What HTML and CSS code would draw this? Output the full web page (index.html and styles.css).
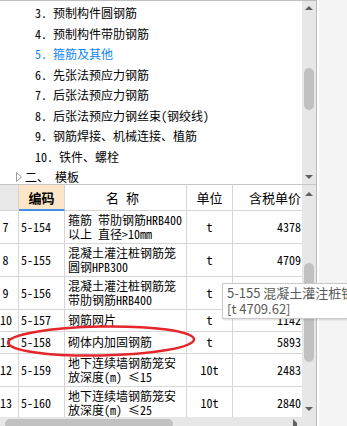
FILE: index.html
```html
<!DOCTYPE html>
<html lang="zh-CN">
<head>
<meta charset="utf-8">
<title>定额列表</title>
<link rel="stylesheet" href="styles.css">
</head>
<body>
<div class="app">
  <div class="main">
    <div class="tree">
      <ul class="tree-list">
        <li class="item"><span class="num">3.</span>预制构件圆钢筋</li>
        <li class="item"><span class="num">4.</span>预制构件带肋钢筋</li>
        <li class="item active"><span class="num">5.</span>箍筋及其他</li>
        <li class="item"><span class="num">6.</span>先张法预应力钢筋</li>
        <li class="item"><span class="num">7.</span>后张法预应力钢筋</li>
        <li class="item"><span class="num">8.</span>后张法预应力钢丝束(钢绞线)</li>
        <li class="item"><span class="num">9.</span>钢筋焊接、机械连接、植筋</li>
        <li class="item"><span class="num">10.</span>铁件、螺栓</li>
        <li class="item group"><svg class="caret" viewBox="0 0 6 10"><polygon points="0.5,0.5 5.5,5 0.5,9.5" fill="none" stroke="#9a9a9a" stroke-width="1"/></svg><span>二、 模板</span></li>
      </ul>
      <div class="vscroll">
        <div class="arrow-box"><div class="tri-up"></div></div>
        <div class="thumb tree-thumb"></div>
        <div class="spacer"></div>
        <div class="arrow-box"><div class="tri-down"></div></div>
      </div>
    </div>
    <div class="table-panel">
      <div class="table-body">
        <div class="grid">
          <div class="c h rn"></div>
          <div class="c h code">编码</div>
          <div class="c h name"><span class="wide">名称</span></div>
          <div class="c h unit">单位</div>
          <div class="c h price">含税单价</div>

          <div class="c rn"><span>7</span></div>
          <div class="c code">5-154</div>
          <div class="c name">箍筋 带肋钢筋HRB400<br>以上 直径&gt;10mm</div>
          <div class="c unit">t</div>
          <div class="c price">4378</div>

          <div class="c rn"><span>8</span></div>
          <div class="c code">5-155</div>
          <div class="c name">混凝土灌注桩钢筋笼<br>圆钢HPB300</div>
          <div class="c unit">t</div>
          <div class="c price">4709</div>

          <div class="c rn"><span>9</span></div>
          <div class="c code">5-156</div>
          <div class="c name">混凝土灌注桩钢筋笼<br>带肋钢筋HRB400</div>
          <div class="c unit">t</div>
          <div class="c price">4621</div>

          <div class="c rn"><span>10</span></div>
          <div class="c code">5-157</div>
          <div class="c name">钢筋网片</div>
          <div class="c unit">t</div>
          <div class="c price">1142</div>

          <div class="c rn"><span>11</span></div>
          <div class="c code">5-158</div>
          <div class="c name">砌体内加固钢筋</div>
          <div class="c unit">t</div>
          <div class="c price">5893</div>

          <div class="c rn"><span>12</span></div>
          <div class="c code">5-159</div>
          <div class="c name">地下连续墙钢筋笼安<br>放深度(m) ≤15</div>
          <div class="c unit">10t</div>
          <div class="c price">2483</div>

          <div class="c rn"><span>13</span></div>
          <div class="c code">5-160</div>
          <div class="c name">地下连续墙钢筋笼安<br>放深度(m) ≤25</div>
          <div class="c unit">10t</div>
          <div class="c price">2840</div>
        </div>
        <div class="vscroll table-scroll">
          <div class="arrow-box"><div class="tri-up"></div></div>
          <div class="thumb table-thumb"></div>
          <div class="spacer"></div>
          <div class="arrow-box"><div class="tri-down"></div></div>
        </div>
      </div>
      <div class="hscroll">
        <div class="hthumb"></div>
        <div class="spacer"></div>
        <div class="harrow"><div class="tri-right"></div></div>
        <div class="corner"></div>
      </div>
    </div>
  </div>
  <div class="side"></div>
</div>

<div class="tooltip">
  <div>5-155 混凝土灌注桩钢筋笼圆钢HPB300</div>
  <div>[t 4709.62]</div>
</div>

<svg class="mark" viewBox="0 0 347 426">
  <ellipse cx="101" cy="341" rx="93" ry="14.5" fill="none" stroke="#e5262a" stroke-width="2.5" transform="rotate(-1 101 341)"/>
</svg>
</body>
</html>
```

FILE: styles.css
```css
* { box-sizing: border-box; }
html, body { margin: 0; padding: 0; }
body {
  width: 347px;
  height: 426px;
  overflow: hidden;
  position: relative;
  background: #f4f4f4;
  font-family: "Noto Sans CJK SC", sans-serif;
  font-size: 12px;
  color: #000;
}
.app { display: flex; height: 426px; }
.main {
  width: 317px;
  border-right: 1px solid #bababa;
  display: flex;
  flex-direction: column;
  background: #fff;
}
.side { flex: 1; border-left: 2px solid #fff; background: #f4f4f4; }

/* tree */
.tree { height: 184px; flex: none; border-top: 1px solid #bebebe; display: flex; }
.tree-list {
  flex: 1;
  margin: 0;
  padding: 2px 0 0;
  list-style: none;
  overflow: hidden;
  font-feature-settings: "hwid" 1;
}
.item { height: 20.5px; line-height: 20.5px; padding-left: 35px; white-space: nowrap; }
.num { margin-right: 6px; }
.item.active { color: #0f87f2; }
.item.group { padding-left: 16px; display: flex; align-items: center; }
.caret { width: 6px; height: 10px; margin-right: 3px; flex: none; }

/* scrollbars */
.vscroll {
  width: 14px;
  flex: none;
  background: #e7e7e7;
  display: flex;
  flex-direction: column;
  align-items: center;
}
.arrow-box {
  width: 14px;
  height: 14px;
  flex: none;
  display: flex;
  align-items: center;
  justify-content: center;
}
.tri-up { border-left: 4px solid transparent; border-right: 4px solid transparent; border-bottom: 4px solid #606060; }
.tri-down { border-left: 4px solid transparent; border-right: 4px solid transparent; border-top: 4px solid #606060; }
.tri-right { border-top: 4px solid transparent; border-bottom: 4px solid transparent; border-left: 4px solid #606060; }
.thumb { width: 10px; border-radius: 5px; background: #c1c1c1; flex: none; }
.tree-thumb { margin-top: 53px; height: 42px; }
.spacer { flex: 1; }
.table-scroll .arrow-box:first-child { margin-top: 2px; }
.table-scroll .arrow-box:last-child { margin-bottom: 1px; }
.table-thumb { margin-top: 62px; height: 99px; }

/* table */
.table-panel {
  flex: 1;
  border-top: 1px solid #c6c6c6;
  display: flex;
  flex-direction: column;
  overflow: hidden;
}
.table-body { height: 232px; flex: none; display: flex; }
.grid {
  flex: 1;
  display: grid;
  grid-template-columns: 19px 46px 122px 46px 69px;
  grid-template-rows: 26px 33px 33px 33px 22px 22px 33px 33px;
  overflow: hidden;
}
.c {
  border-right: 1px solid #d6d6d6;
  border-bottom: 1px solid #d6d6d6;
  display: flex;
  align-items: center;
  overflow: hidden;
  white-space: nowrap;
  line-height: 14.5px;
  font-feature-settings: "hwid" 1;
}
.c.rn span { width: 11px; flex: none; text-align: center; }
.c.code { padding-left: 2px; }
.c.name { padding-left: 3px; }
.c.unit { justify-content: center; }
.c.price { justify-content: flex-end; padding-right: 1px; border-right: none; }

.h { font-size: 13px; justify-content: center; font-feature-settings: normal; padding-top: 2px; }
.h.rn { background: #e8e8e8; }
.h.code { background: #fde6c8; font-weight: bold; border-bottom: 2px solid #3f8fe6; padding-left: 0; }
.h.name { padding-left: 0; padding-right: 6px; }
.h.price { justify-content: flex-end; }
.wide { letter-spacing: 7px; margin-right: -7px; }

/* horizontal scrollbar */
.hscroll { height: 14px; flex: none; background: #e7e7e7; display: flex; }
.hthumb { margin: 2px 0 0 5px; width: 168px; height: 10px; border-radius: 5px; background: #c1c1c1; }
.harrow { width: 14px; flex: none; display: flex; justify-content: center; padding-top: 2px; }
.corner { width: 14px; flex: none; }

/* overlays */
.tooltip {
  position: absolute;
  left: 222px;
  top: 283px;
  width: 125px;
  height: 36px;
  overflow: hidden;
  background: #fff;
  border: 1px solid #c9c9c9;
  border-right: none;
  box-shadow: 1px 1px 2px rgba(0, 0, 0, 0.15);
  padding: 1px 0 1px 4px;
  font-size: 13px;
  line-height: 16px;
  color: #5a5a5a;
  white-space: nowrap;
}
.mark {
  position: absolute;
  left: 0;
  top: 0;
  width: 347px;
  height: 426px;
  pointer-events: none;
}
```
